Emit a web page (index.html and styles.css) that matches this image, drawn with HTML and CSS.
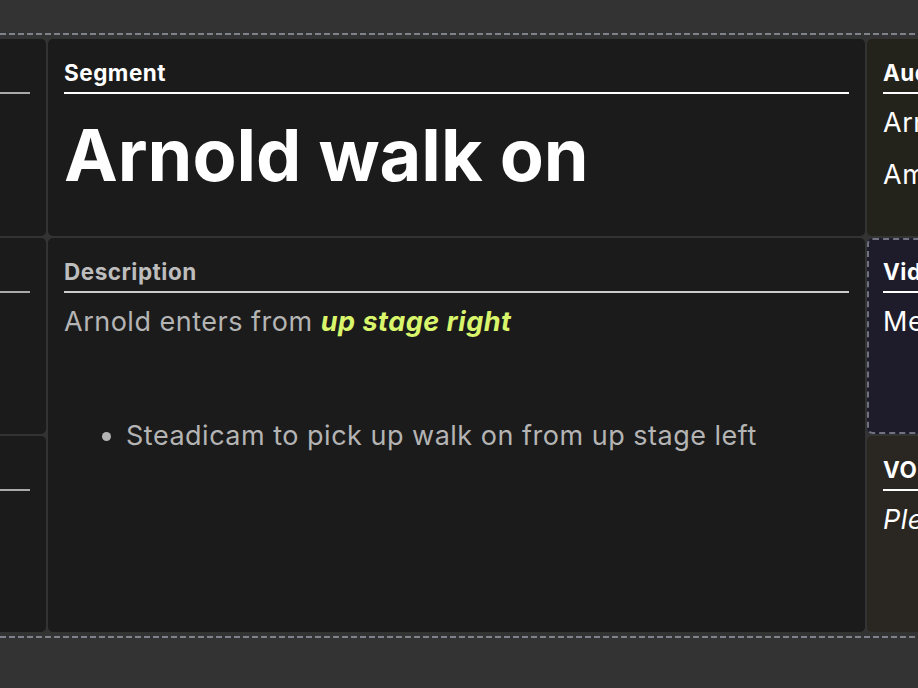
FILE: index.html
```
<!DOCTYPE html>
<html lang="en">
<head>
  <meta charset="UTF-8" />
  <title>Run of Show</title>
  <meta name="viewport" content="width=device-width, initial-scale=1.0" />
  <link rel="stylesheet" href="styles.css">
</head>
<body>

  <div class="board">
    <div class="dashes"></div>

    <!-- Show grid, scrolled so the current segment sits in the middle -->
    <div class="track">
      <div class="grid">
        <section class="cell dim col-a row-1">
          <h3 class="label">Shot</h3>
        </section>
        <section class="cell dim col-a row-2">
          <h3 class="label">Notes</h3>
        </section>
        <section class="cell dim col-a row-3">
          <h3 class="label">Cue</h3>
        </section>

        <section class="cell col-b row-1">
          <h3 class="label">Segment</h3>
          <h1 class="title">Arnold walk on</h1>
        </section>
        <section class="cell soft col-b row-23">
          <h3 class="label">Description</h3>
          <p class="text">Arnold enters from <em class="hl">up stage right</em></p>
          <ul class="points">
            <li>Steadicam to pick up walk on from up stage left</li>
          </ul>
        </section>

        <section class="cell audio col-c row-1">
          <h3 class="label">Audio</h3>
          <p class="text">Arnold handheld mic</p>
          <p class="text">Ambient stage mics</p>
        </section>
        <section class="cell video col-c row-2">
          <h3 class="label">Video</h3>
          <p class="text">Media server walk on loop</p>
        </section>
        <section class="cell vo col-c row-3">
          <h3 class="label">VO</h3>
          <p class="text"><em>Please welcome to the stage</em></p>
        </section>
      </div>
    </div>

    <div class="dashes"></div>
  </div>

</body>
</html>
```

FILE: styles.css
```
* {
  box-sizing: border-box;
  margin: 0;
  padding: 0;
  font-family: 'Inter', 'Noto Sans', sans-serif;
}

body {
  min-height: 100vh;
  background: #333333;
  overflow: hidden;
}

.board {
  padding-top: 33px;
}

.dashes {
  height: 2px;
  background: repeating-linear-gradient(90deg, #80828b 0 6px, transparent 6px 9px);
}

.track {
  overflow: hidden;
  padding: 4px 0;
}

.grid {
  display: grid;
  grid-template-columns: 300px 817px 300px;
  grid-template-rows: 197px 196px 196px;
  gap: 2px;
  margin-left: -254px;
}

.cell {
  background: #1b1b1b;
  border-radius: 5px;
  padding: 20px 16px;
  overflow: hidden;
  white-space: nowrap;
  color: #ffffff;
}

.col-a { grid-column: 1; }
.col-b { grid-column: 2; }
.col-c { grid-column: 3; }
.row-1 { grid-row: 1; }
.row-2 { grid-row: 2; }
.row-3 { grid-row: 3; }
.row-23 { grid-row: 2 / 4; }

.label {
  font-size: 22.5px;
  font-weight: 700;
  letter-spacing: 0.5px;
  line-height: 27px;
  padding-bottom: 6px;
  border-bottom: 2px solid #ffffff;
  color: #ffffff;
}

.title {
  font-size: 72px;
  font-weight: 700;
  line-height: 84px;
  margin-top: 19px;
}

.text {
  font-size: 27px;
  letter-spacing: 0.5px;
  line-height: 36px;
  margin-top: 11px;
}

.text + .text {
  margin-top: 16px;
}

.dim .label {
  color: #aaaaaa;
  border-bottom-color: #aaaaaa;
}

.soft {
  color: #b4b4b4;
}

.soft .label {
  color: #bdbdbd;
  border-bottom-color: #cccccc;
}

.hl {
  color: #d9f56b;
  font-weight: 700;
}

.points {
  margin-top: 78px;
  padding-left: 62px;
  font-size: 27px;
  letter-spacing: 0.5px;
  line-height: 36px;
}

.audio {
  background: #23231c;
}

.video {
  background: #1e1c2b;
  border: 2px dashed #707280;
  border-radius: 6px;
  padding: 18px 14px;
}

.vo {
  background: #2a2621;
}
```
